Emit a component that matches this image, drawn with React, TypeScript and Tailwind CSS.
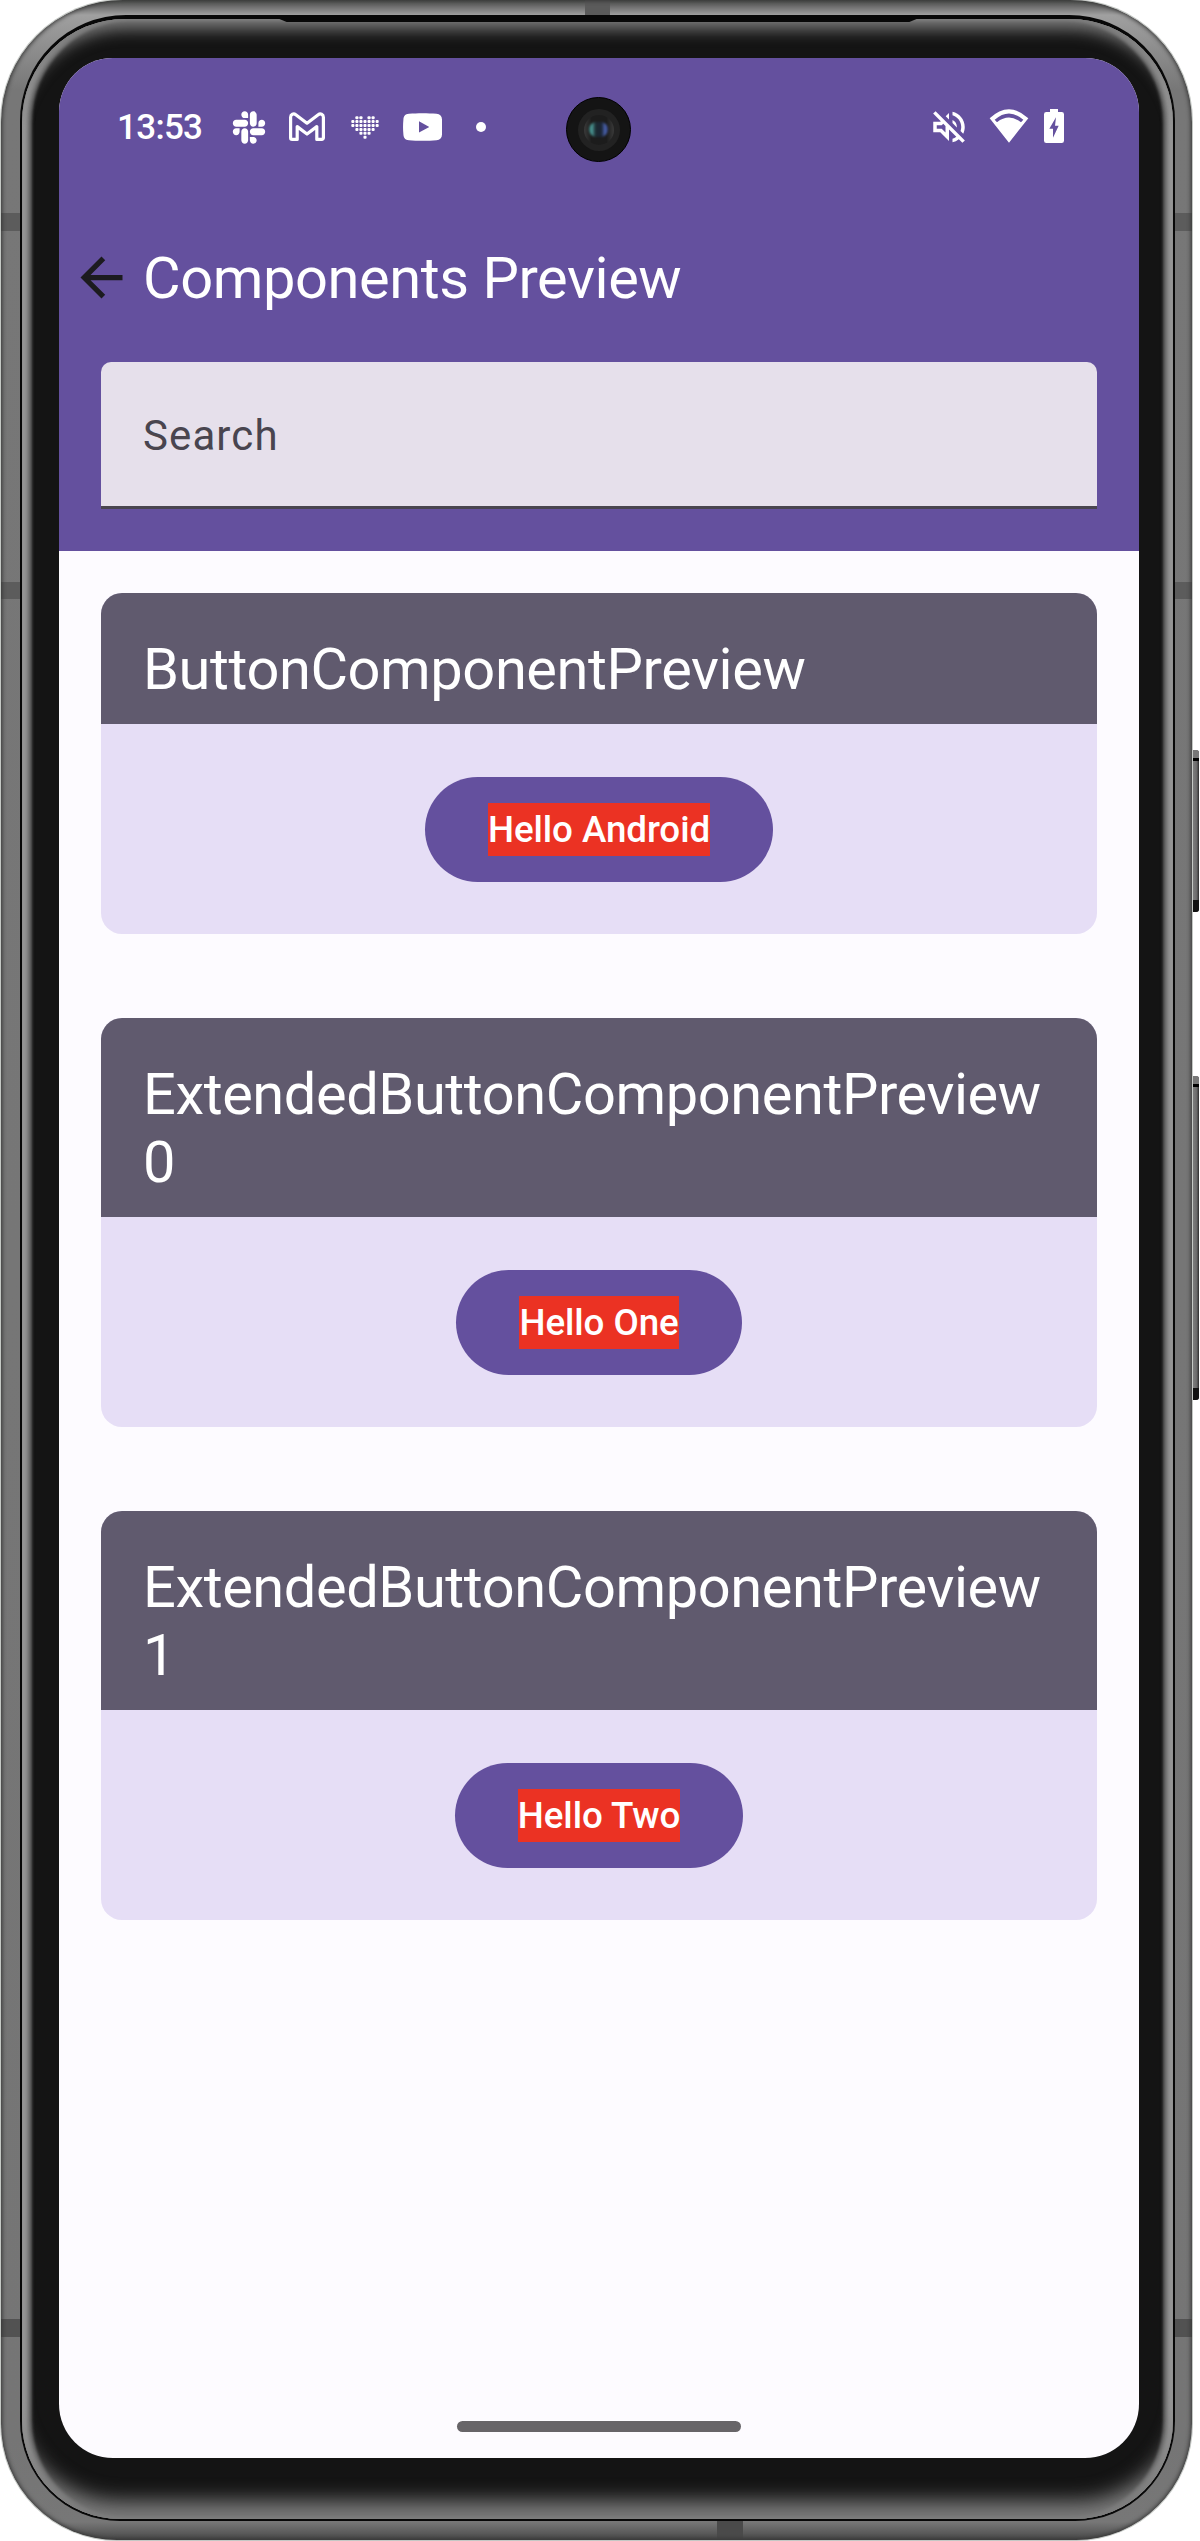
import { FaSlack } from "react-icons/fa";
import { MdArrowBack, MdOutlineVolumeOff } from "react-icons/md";

const PREVIEWS = [
  { title: "ButtonComponentPreview", label: "Hello Android" },
  { title: "ExtendedButtonComponentPreview 0", label: "Hello One" },
  { title: "ExtendedButtonComponentPreview 1", label: "Hello Two" },
];

function GmailIcon() {
  return (
    <svg width="38" height="30" viewBox="0 0 38 30" fill="none" stroke="#fff" strokeWidth="3.2" strokeLinejoin="round">
      <path d="M2.600 5.200v20.600a1.600 1.600 0 0 0 1.600 1.600h5V14.600L19 22l9.800-7.400v12.800h5a1.600 1.600 0 0 0 1.600-1.600V5.200c0-3-3-4.200-5.200-2.500L19 11.200 7.800 2.700C5.600 1 2.600 2.200 2.600 5.200z" />
    </svg>
  );
}

const HEART_ROWS = [
  [1, 2, 4, 5],
  [0, 1, 2, 3, 4, 5, 6],
  [0, 1, 2, 3, 4, 5, 6],
  [1, 2, 3, 4, 5],
  [2, 3, 4],
  [3],
];

function HeartDotsIcon() {
  return (
    <svg width="28" height="23" viewBox="0 0 28 23" fill="#fff">
      {HEART_ROWS.map((cols, r) =>
        cols.map((c) => <rect key={`${r}-${c}`} x={0.3 + c * 4.05} y={0.2 + r * 3.9} width="3.1" height="3" rx="1" />)
      )}
    </svg>
  );
}

function VideoIcon() {
  return (
    <svg width="39" height="28" viewBox="0 0 39 28" fill="#fff" fillRule="evenodd">
      <path d="M6 .8C14 0 25 0 33.500 .8 37 1.100 39 3 39 6.500v15c0 3.500-2 5.400-5.500 5.700-8.500.8-19.500.8-27.500 0C2 26.900.7 25 .4 21.500c-.5-5-.5-10 0-15C.7 3 2 1.100 6 .8zM16 8.300v11.200L26.300 14z" />
    </svg>
  );
}

function WifiIcon() {
  return (
    <svg width="40" height="34" viewBox="0 0 120 102" fill="#fff" fillRule="evenodd">
      <path d="M2 28Q60-26 118 28L60 101zM17 32.500l7 7Q60 12 96 39.500l7-7Q60-6 17 32.500z" />
    </svg>
  );
}

function BatteryIcon() {
  return (
    <svg width="20" height="34" viewBox="0 0 60 102" fill="#fff" fillRule="evenodd">
      <path d="M18 0h24v9h11a7 7 0 0 1 7 7v79a7 7 0 0 1-7 7H7a7 7 0 0 1-7-7V16a7 7 0 0 1 7-7h11zM36 25L16 59h11v27l17-36H33z" />
    </svg>
  );
}

function Camera() {
  return (
    <div className="absolute left-[507px] top-[39px] flex size-[65px] items-center justify-center rounded-full border border-black bg-[#141414]">
      <div className="flex size-[42px] items-center justify-center rounded-full bg-[#222222]">
        <div className="flex size-[30px] items-center justify-center rounded-full bg-[linear-gradient(to_right,#3a3a3a,#1c1c1c_25%,#1c1c1c_75%,#3a3a3a)]">
          <div className="h-[15px] w-[19px] rounded-full bg-[linear-gradient(to_right,#2f6e6c_0%,#4f9f9b_14%,#1b2a31_35%,#1b2433_65%,#4d66b4_86%,#2c3a72_100%)] blur-[1px]" />
        </div>
      </div>
    </div>
  );
}

function StatusBar() {
  return (
    <div className="relative flex h-[138px] items-center pl-[58px] pr-[75px] text-white">
      <span className="w-[87px] text-[35px] font-medium leading-none tracking-[-0.7px]">13:53</span>
      <FaSlack className="ml-[27px] mt-px h-[37px] w-[36px]" />
      <div className="ml-[21px]"><GmailIcon /></div>
      <div className="ml-[25px]"><HeartDotsIcon /></div>
      <div className="ml-[24px]"><VideoIcon /></div>
      <div className="ml-[34px] size-[10px] rounded-full bg-white" />
      <MdOutlineVolumeOff className="ml-auto size-[42px]" />
      <div className="ml-[19px] mb-[3px]"><WifiIcon /></div>
      <div className="ml-[15px] mb-[2px]"><BatteryIcon /></div>
      <Camera />
    </div>
  );
}

function PreviewCard({ title, label }: { title: string; label: string }) {
  return (
    <section className="overflow-hidden rounded-[21px] bg-[#e6def6]">
      <h2 className="bg-[#605a6e] px-[42px] pb-[21px] pt-[42px] text-[57.75px] leading-[68px] tracking-[-0.41px] text-white">{title}</h2>
      <div className="flex h-[210px] items-center justify-center">
        <button className="flex h-[105px] items-center rounded-full bg-[#64509e] px-[63px] text-[36.75px] font-medium leading-[53px] tracking-[-0.08px] text-white">
          <span className="bg-[#eb3223]">{label}</span>
        </button>
      </div>
    </section>
  );
}

function Screen() {
  return (
    <div className="flex h-[2400px] w-[1080px] flex-col overflow-hidden rounded-[54px] bg-[#fdfbff]">
      <header className="bg-[#64509e] pb-[42px]">
        <StatusBar />
        <div className="flex h-[166px] items-center pb-[2px] pl-[11px]">
          <MdArrowBack className="mb-[2px] size-[63px] text-[#1c1b1f]" />
          <h1 className="ml-[10px] text-[57.75px] leading-[68px] tracking-[-0.41px] text-white">Components Preview</h1>
        </div>
        <div className="mx-[42px] flex h-[147px] items-center rounded-t-[10px] border-b-[3px] border-[#49454f] bg-[#e6e0eb] px-[42px]">
          <span className="pt-[3px] text-[42px] tracking-[1.1px] text-[#49454f]">Search</span>
        </div>
      </header>
      <main className="flex flex-1 flex-col gap-[84px] px-[42px] pt-[42px]">
        {PREVIEWS.map((p) => (
          <PreviewCard key={p.title} {...p} />
        ))}
      </main>
      <div className="mx-auto mb-[26px] h-[11px] w-[284px] rounded-full bg-[#676468]" />
    </div>
  );
}

function SideKey({ className }: { className: string }) {
  return (
    <div className={`absolute right-px flex w-[9px] flex-col overflow-hidden rounded-r-[3px] bg-[linear-gradient(to_right,#4a4a4a,#7c7c7c_40%,#6a6a6a_75%,#2a2a2a)] ${className}`}>
      <div className="h-[8px] bg-[#777777]" />
      <div className="h-[3px] bg-black" />
      <div className="mt-auto h-[12px] bg-[#111111]" />
    </div>
  );
}

export default function App() {
  return (
    <div className="relative h-[2541px] w-[1200px] overflow-hidden bg-white font-[Roboto,sans-serif]">
      <SideKey className="top-[750px] h-[162px]" />
      <SideKey className="top-[1076px] h-[324px]" />

      <div className="relative ml-px h-[2540px] w-[1191px] overflow-hidden rounded-b-[116px] rounded-t-[122px] bg-[linear-gradient(to_bottom,#505350_0,#6a6a6a_6px,#a0a0a0_15px,#777777_90px,#757575_2440px,#777777_2522px,#484848_2540px)] pb-[19px] pl-[19px] pr-[17px] pt-[15px] shadow-[0_0_0_1px_#c4c8c4]">
        <div className="absolute left-0 top-[213px] h-[18px] w-full bg-[#5c5c5c]" />
        <div className="absolute left-0 top-[582px] h-[17px] w-full bg-[#5c5c5c]" />
        <div className="absolute left-0 top-[2319px] h-[18px] w-full bg-[#525252]" />
        <div className="absolute left-[584px] top-0 h-[18px] w-[25px] bg-[#5b5b5b]" />
        <div className="absolute bottom-0 left-[716px] h-[22px] w-[26px] bg-[#4a4a4a]" />
        <div className="absolute inset-0 rounded-b-[116px] rounded-t-[122px] shadow-[inset_0_0_4px_1px_#333333]" />

        <div className="relative h-full rounded-b-[100px] rounded-t-[106px] bg-[#080808] px-[2px] pb-[2px] pt-[4px]">
          <div className="relative h-full overflow-hidden rounded-b-[98px] rounded-t-[103px] bg-[#141414] pl-[37px] pt-[39px] shadow-[inset_0_-28px_20px_-10px_#7c7c7c,inset_0_18px_16px_-8px_#7c7c7c,inset_6px_0_4px_0px_#9c9c9c,inset_-6px_0_4px_0px_#9c9c9c,inset_10px_0_3px_0px_#5c5c5c,inset_-10px_0_3px_0px_#5c5c5c]">
            <Screen />
          </div>
          <div className="absolute left-[257px] top-[3px] h-[4px] w-[642px] bg-[#080808] [clip-path:polygon(0_0,100%_0,98.500%_100%,1.500%_100%)]" />
        </div>
      </div>
    </div>
  );
}
